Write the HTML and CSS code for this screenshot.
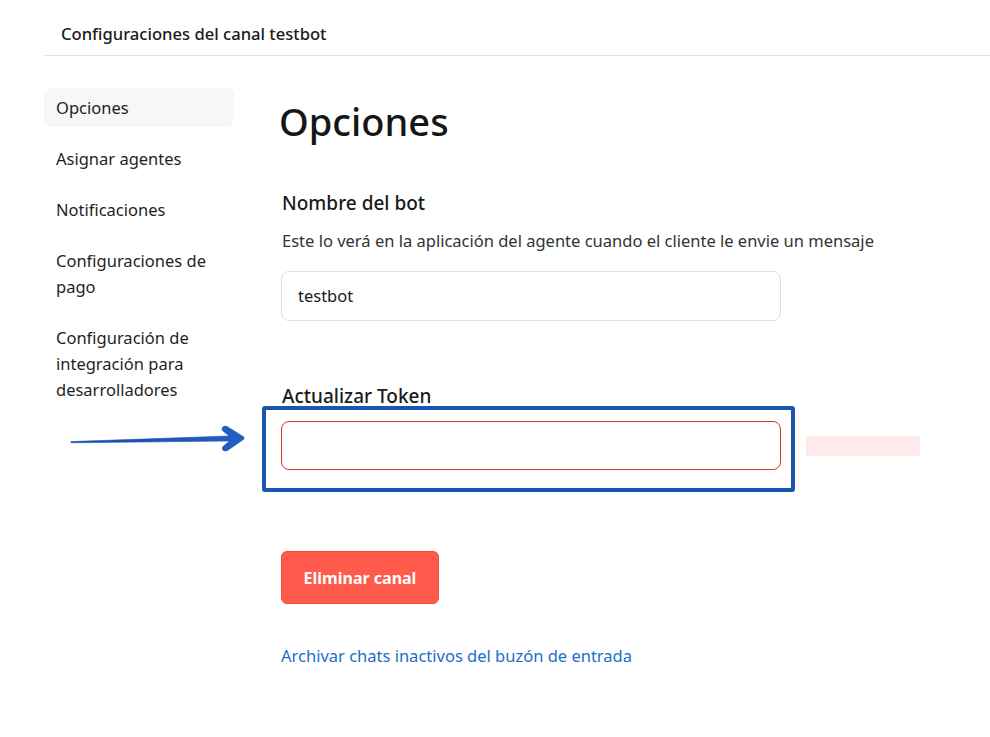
FILE: index.html
```html
<!DOCTYPE html>
<html lang="es">
<head>
<meta charset="utf-8">
<title>Configuraciones del canal testbot</title>
<link rel="stylesheet" href="styles.css">
</head>
<body>
<header class="topbar">
  <div class="topbar-title">Configuraciones del canal testbot</div>
</header>
<div class="layout">
  <nav class="sidebar">
    <a class="nav-item active">Opciones</a>
    <a class="nav-item">Asignar agentes</a>
    <a class="nav-item">Notificaciones</a>
    <a class="nav-item">Configuraciones de pago</a>
    <a class="nav-item">Configuración de integración para desarrolladores</a>
  </nav>
  <main class="content">
    <h1 class="title">Opciones</h1>
    <section class="field">
      <div class="field-label">Nombre del bot</div>
      <div class="field-help">Este lo verá en la aplicación del agente cuando el cliente le envie un mensaje</div>
      <div class="input">testbot</div>
    </section>
    <section class="field token-field">
      <div class="field-label">Actualizar Token</div>
      <div class="token-row">
        <div class="input input-error"></div>
        <span class="ghost"></span>
        <div class="highlight-box"></div>
        <svg class="arrow" width="200" height="40" viewBox="60 420 200 40" aria-hidden="true">
          <defs>
            <linearGradient id="ag" x1="0" y1="0" x2="1" y2="0">
              <stop offset="0" stop-color="#1a4aa6"/>
              <stop offset="1" stop-color="#225fc4"/>
            </linearGradient>
          </defs>
          <path d="M71 442.8 L71 441.6 L229 436 L222.5 430.5 Q221 428 223.5 426.5 Q225.5 425.6 227.5 426.8 L243.5 436.8 Q245 438 243.5 439.4 L227.5 450.4 Q225 451.8 223 450.2 Q221.5 448 223 446.5 L229.5 441 Z" fill="url(#ag)" stroke="#1d52b3" stroke-width="0.6" stroke-linejoin="round"/>
        </svg>
      </div>
    </section>
    <button class="btn-danger" type="button">Eliminar canal</button>
    <a class="link">Archivar chats inactivos del buzón de entrada</a>
  </main>
</div>
</body>
</html>
```

FILE: styles.css
```css
* { box-sizing: border-box; }
html, body { margin: 0; padding: 0; background: #ffffff; }
body {
  font-family: "Noto Sans", "Open Sans", "DejaVu Sans", sans-serif;
  color: #1d1d1f;
  width: 990px;
  height: 737px;
  overflow: hidden;
}
.topbar {
  margin-left: 44px;
  height: 56px;
  border-bottom: 1px solid #e4e4e4;
  padding-left: 17px;
  padding-top: 22px;
}
.topbar-title {
  font-size: 16.6px;
  line-height: 24px;
  font-weight: 500;
  color: #1a1a1a;
}
.layout {
  display: flex;
  margin-left: 44px;
  padding-top: 32px;
}
.sidebar {
  width: 190px;
  flex: none;
  display: flex;
  flex-direction: column;
  gap: 12px;
}
.nav-item {
  display: block;
  padding: 6.5px 12px;
  font-size: 16.5px;
  line-height: 26px;
  color: #1f1f1f;
  border-radius: 8px;
}
.nav-item.active { background: #f5f7f8; }
.content {
  margin-left: 47px;
  padding-top: 9px;
  display: flex;
  flex-direction: column;
  align-items: flex-start;
}
.title {
  margin: 0 0 0 -2px;
  font-size: 38px;
  line-height: 48px;
  font-weight: 500;
  color: #161616;
}
.field { display: flex; flex-direction: column; align-items: flex-start; }
.field-label {
  margin-top: 45px;
  margin-left: 1px;
  font-size: 19px;
  line-height: 26px;
  font-weight: 500;
  color: #1a1a1a;
}
.field-help {
  margin-top: 13px;
  margin-left: 1px;
  font-size: 16.5px;
  line-height: 24px;
  color: #333333;
}
.input {
  margin-top: 18px;
  width: 500px;
  height: 50px;
  border: 1px solid #dedede;
  border-radius: 8px;
  padding: 0 16px;
  font-size: 16.5px;
  line-height: 48px;
  color: #1a1a1a;
}
.token-field .field-label { margin-top: 62px; }
.token-row {
  position: relative;
  display: flex;
  align-items: center;
  margin-top: 12px;
}
.token-row .input { margin-top: 0; height: 49px; }
.input-error { border-color: #d8332c; }
.ghost {
  margin-left: 25px;
  width: 114px;
  height: 20px;
  background: #fdeaea;
}
.highlight-box {
  position: absolute;
  left: -19px;
  top: -15px;
  width: 533px;
  height: 86px;
  border: 4px solid #1b55b3;
  border-radius: 3px;
}
.arrow {
  position: absolute;
  left: -221px;
  top: -1px;
}
.btn-danger {
  margin-top: 81px;
  width: 158px;
  height: 53px;
  background: #ff5a4b;
  border: 1px solid #f04c3e;
  border-radius: 6px;
  color: #ffffff;
  font-family: inherit;
  font-size: 16px;
  font-weight: 700;
  padding: 0;
}
.link {
  margin-top: 40px;
  font-size: 16.5px;
  line-height: 24px;
  color: #1b6fc8;
}
```
